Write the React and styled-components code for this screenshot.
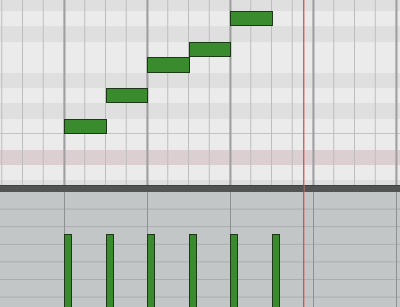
import React from "react";
import styled, { createGlobalStyle } from "styled-components";

const BEAT = 20.75;
const ORIGIN = 1.75;
const ROW = 15.4;
const ROW_OFFSET = -4.4;

// top to bottom, starting at the G# that is cut off at the top
const rows = [
  { name: "G#", black: true },
  { name: "G" },
  { name: "F#", black: true },
  { name: "F" },
  { name: "E" },
  { name: "D#", black: true },
  { name: "D" },
  { name: "C#", black: true },
  { name: "C", octave: true },
  { name: "B" },
  { name: "A#", black: true, marked: true },
  { name: "A" },
  { name: "G#", black: true },
];

// the last note sits above the visible rows, only its velocity shows
const notes = [
  { beat: 3, row: 8, length: 2, velocity: 73 },
  { beat: 5, row: 6, length: 2, velocity: 73 },
  { beat: 7, row: 4, length: 2, velocity: 73 },
  { beat: 9, row: 3, length: 2, velocity: 73 },
  { beat: 11, row: 1, length: 2, velocity: 73 },
  { beat: 13, row: -2, length: 2, velocity: 73 },
];

const PLAYHEAD = 303;

const GlobalStyle = createGlobalStyle`
  html, body {
    margin: 0;
    padding: 0;
    overflow: hidden;
    background: #e9e9e9;
  }
`;

const Editor = styled.div`
  position: relative;
  width: 400px;
  height: 307px;
  display: flex;
  flex-direction: column;
  overflow: hidden;
  font-family: "Liberation Sans", sans-serif;
`;

const NoteGrid = styled.div`
  position: relative;
  height: 185px;
  flex: none;
  overflow: hidden;
`;

const Rows = styled.div`
  display: flex;
  flex-direction: column;
  margin-top: ${ROW_OFFSET}px;
`;

const KeyRow = styled.div`
  height: ${ROW}px;
  flex: none;
  box-sizing: border-box;
  background: ${(p) => (p.$marked ? "#dccfd1" : p.$black ? "#dfdfdf" : "#ebebeb")};
  border-bottom: ${(p) => (p.$octave ? "1px solid #c4c4c4" : "none")};
`;

const GridLines = styled.div`
  position: absolute;
  inset: 0;
  pointer-events: none;
  background-image:
    linear-gradient(to right, #a0a0a0 0, #a0a0a0 1.5px, transparent 1.5px),
    linear-gradient(to right, #bdbdbd 0, #bdbdbd 1px, transparent 1px);
  background-size: ${BEAT * 4}px 100%, ${BEAT}px 100%;
  background-position: 63.5px 0, ${ORIGIN - 0.5}px 0;
`;

const Note = styled.div`
  position: absolute;
  box-sizing: border-box;
  height: 15.4px;
  background: #3a8b2e;
  border: 1px solid #1d3819;
`;

const Divider = styled.div`
  height: 7px;
  flex: none;
  background: #525353;
  border-top: 1px solid #404040;
  box-sizing: border-box;
`;

const VelocityPane = styled.div`
  position: relative;
  flex: 1;
  background-color: #c3c6c7;
  background-image:
    linear-gradient(to right, #8e9192 0, #8e9192 1px, transparent 1px),
    linear-gradient(to bottom, transparent 16.6px, #a9adae 16.6px);
  background-size: ${BEAT * 4}px 100%, 100% 17.6px;
  background-position: 64px 0, 0 0;
`;

const VelocityBar = styled.div`
  position: absolute;
  bottom: 0;
  width: 8px;
  box-sizing: border-box;
  background: #3a8b2e;
  border: 1px solid #1d3819;
  border-bottom: none;
`;

const Playhead = styled.div`
  position: absolute;
  top: 0;
  bottom: 0;
  width: 2px;
  background: linear-gradient(to right, rgba(185, 60, 60, 0.75) 50%, rgba(210, 120, 120, 0.5) 50%);
  pointer-events: none;
`;

export default function App() {
  return (
    <>
      <GlobalStyle />
      <Editor>
        <NoteGrid>
          <Rows>
            {rows.map((r, i) => (
              <KeyRow key={i} $black={r.black} $marked={r.marked} $octave={r.octave} />
            ))}
          </Rows>
          <GridLines />
          {notes.map((n, i) => (
            <Note
              key={i}
              style={{
                left: ORIGIN + n.beat * BEAT,
                top: ROW_OFFSET + n.row * ROW,
                width: n.length * BEAT + 1,
              }}
            />
          ))}
        </NoteGrid>
        <Divider />
        <VelocityPane>
          {notes.map((n, i) => (
            <VelocityBar
              key={i}
              style={{ left: ORIGIN + n.beat * BEAT, height: n.velocity }}
            />
          ))}
        </VelocityPane>
        <Playhead style={{ left: PLAYHEAD }} />
      </Editor>
    </>
  );
}
